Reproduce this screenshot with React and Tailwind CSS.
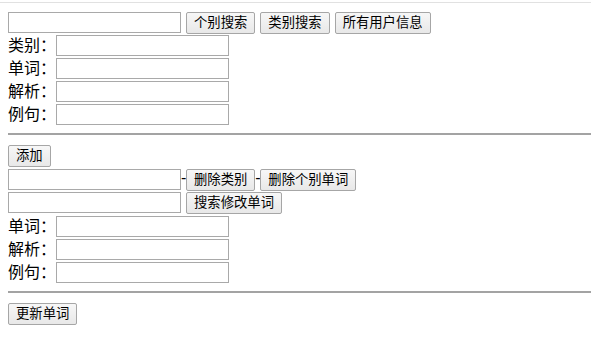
// Word admin page: search, edit and update words

const font = { fontFamily: '"Liberation Sans", "Noto Sans CJK SC", sans-serif' };

function Btn({ children }) {
  return (
    <button className="h-[22px] px-[7px] border border-[#a6a6a6] rounded-[2px] bg-gradient-to-b from-[#f7f7f7] to-[#e8e8e8] text-[13.33px] leading-none text-black whitespace-nowrap">
      {children}
    </button>
  );
}

function Field() {
  return <input className="w-[173px] h-[21px] border border-[#a9a9a9] bg-white outline-none" />;
}

function LabelRow({ label }) {
  return (
    <div className="flex items-center h-[23px]">
      <span className="text-[16px] leading-none text-black">{label}：</span>
      <Field />
    </div>
  );
}

function Dash() {
  return <span className="w-[5px] mb-[4px] text-[16px] leading-none text-black text-center">-</span>;
}

export default function App() {
  return (
    <div className="w-[591px] h-[360px] bg-white overflow-hidden" style={font}>
      <div className="mt-[2px] border-t border-[#e1e1e1]" />

      <div className="pl-2">
        <div className="mt-[8px] flex items-center h-[23px] gap-[5px]">
          <Field />
          <Btn>个别搜索</Btn>
          <Btn>类别搜索</Btn>
          <Btn>所有用户信息</Btn>
        </div>
        <LabelRow label="类别" />
        <LabelRow label="单词" />
        <LabelRow label="解析" />
        <LabelRow label="例句" />

        <div className="mt-[7px] h-[2px] bg-[#a3a3a3]" />

        <div className="mt-[8px]">
          <Btn>添加</Btn>
        </div>

        <div className="mt-px flex items-center h-[23px]">
          <Field />
          <Dash />
          <Btn>删除类别</Btn>
          <Dash />
          <Btn>删除个别单词</Btn>
        </div>
        <div className="flex items-center h-[23px] gap-[5px]">
          <Field />
          <Btn>搜索修改单词</Btn>
        </div>

        <div className="mt-px">
          <LabelRow label="单词" />
          <LabelRow label="解析" />
          <LabelRow label="例句" />
        </div>

        <div className="mt-[7px] h-[2px] bg-[#a3a3a3]" />

        <div className="mt-[8px]">
          <Btn>更新单词</Btn>
        </div>
      </div>
    </div>
  );
}
